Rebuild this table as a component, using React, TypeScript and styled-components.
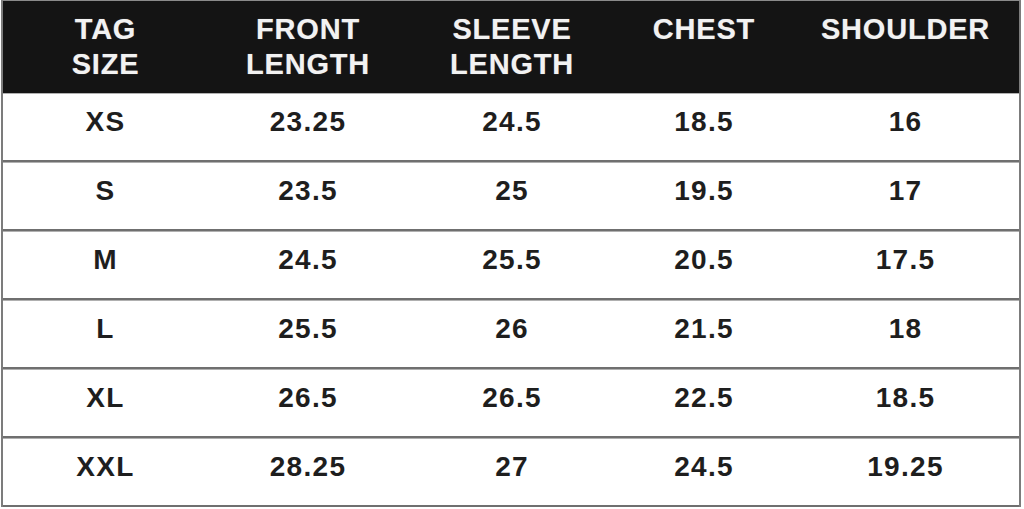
import React from "react";
import styled, { createGlobalStyle } from "styled-components";

const Global = createGlobalStyle`
  html, body { margin: 0; padding: 0; background: #ffffff; }
  body { font-family: "Liberation Sans", Arial, sans-serif; }
`;

const COLS = "205px 200px 208px 176px 227px";

const Table = styled.div`
  margin-left: 1px;
  width: 1016px;
  border-left: 2px solid #7c7c7c;
  border-right: 2px solid #7c7c7c;
  border-top: 1px solid #8a8a8a;
  display: flex;
  flex-direction: column;
`;

const HeaderRow = styled.div`
  display: grid;
  grid-template-columns: ${COLS};
  height: 92px;
  background: #141414;
`;

const HeadCell = styled.div`
  color: #f2f2f2;
  font-weight: 700;
  font-size: 29px;
  line-height: 35px;
  letter-spacing: 0.8px;
  text-align: center;
  padding-top: 11px;
  text-shadow: 0 0 1px rgba(255, 255, 255, 0.4);
`;

const Row = styled.div`
  display: grid;
  grid-template-columns: ${COLS};
  height: 67px;
  border-bottom: 2px solid #6f6f6f;
  box-shadow: inset 0 1px 0 #b0b0b0;
  background: #ffffff;
`;

const Cell = styled.div`
  display: flex;
  align-items: center;
  justify-content: center;
  padding-bottom: 9px;
  color: #1e1e1e;
  font-weight: 700;
  font-size: 28px;
  letter-spacing: 1.3px;
`;

const headers: string[][] = [
  ["TAG", "SIZE"],
  ["FRONT", "LENGTH"],
  ["SLEEVE", "LENGTH"],
  ["CHEST"],
  ["SHOULDER"],
];

const rows: string[][] = [
  ["XS", "23.25", "24.5", "18.5", "16"],
  ["S", "23.5", "25", "19.5", "17"],
  ["M", "24.5", "25.5", "20.5", "17.5"],
  ["L", "25.5", "26", "21.5", "18"],
  ["XL", "26.5", "26.5", "22.5", "18.5"],
  ["XXL", "28.25", "27", "24.5", "19.25"],
];

export default function App() {
  return (
    <>
      <Global />
      <Table>
        <HeaderRow>
          {headers.map((h, i) => (
            <HeadCell key={i}>
              {h.map((line, j) => (
                <div key={j}>{line}</div>
              ))}
            </HeadCell>
          ))}
        </HeaderRow>
        {rows.map((r, i) => (
          <Row key={i}>
            {r.map((v, j) => (
              <Cell key={j}>{v}</Cell>
            ))}
          </Row>
        ))}
      </Table>
    </>
  );
}
